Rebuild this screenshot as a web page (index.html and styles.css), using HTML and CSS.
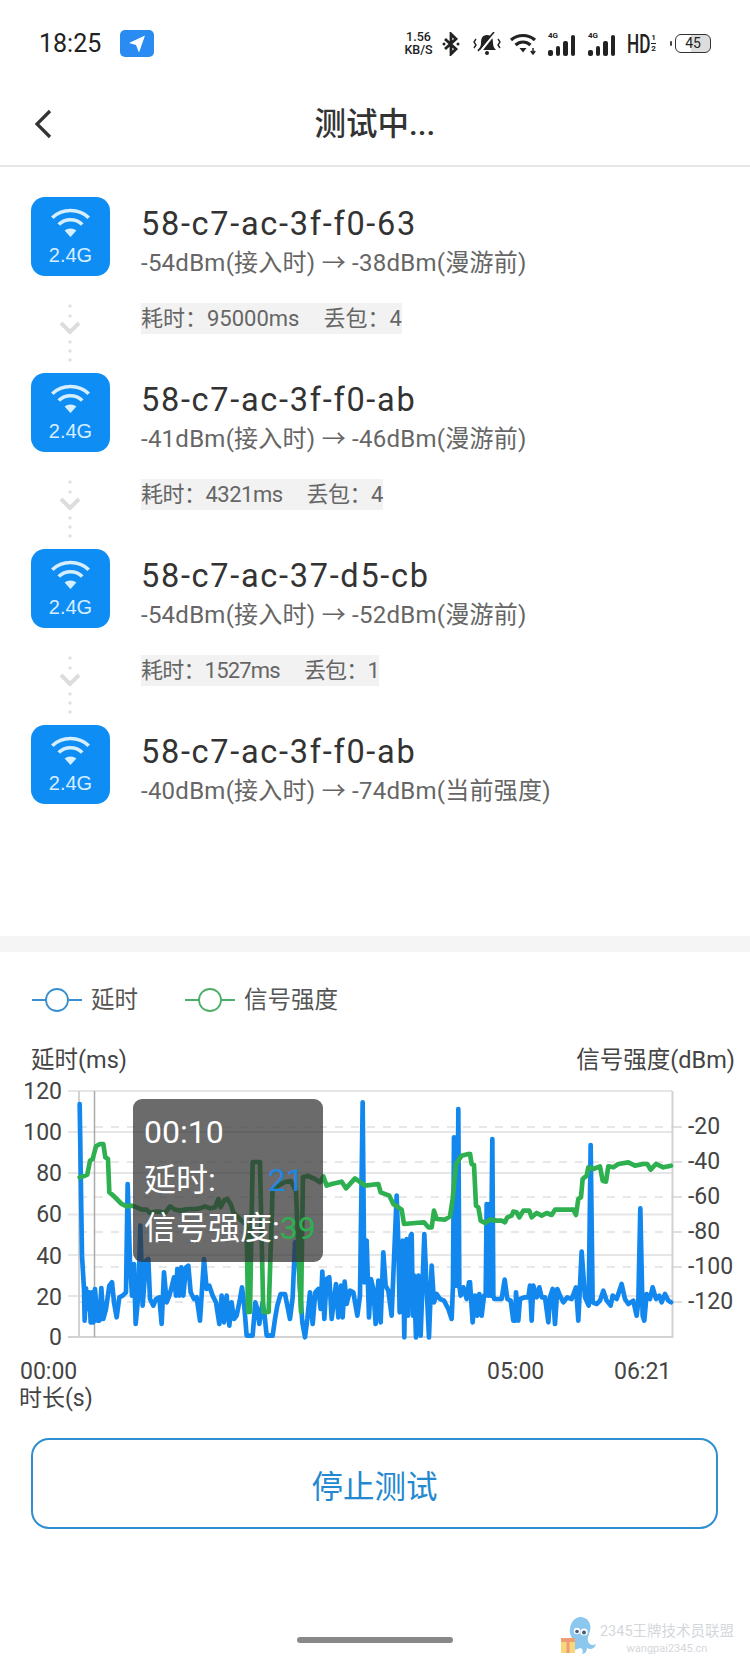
FILE: index.html
```html
<!DOCTYPE html>
<html lang="zh">
<head>
<meta charset="utf-8">
<title>测试中...</title>
<link rel="stylesheet" href="styles.css">
</head>
<body>
<div class="page">
  <header class="statusbar">
    <span class="time">18:25</span>
    <svg class="loc" viewBox="0 0 34 27"><rect width="34" height="27" rx="5" fill="#2a8cf2"/><path d="M25 5.500 L9 13 L16 15 L19 22.500 Z" fill="#fff"/></svg>
    <div class="status-right">
      <div class="speed"><span>1.56</span><span>KB/S</span></div>
      <svg class="bt" viewBox="0 0 18 24"><path d="M3 7 L14 17 L9 22 V2 L14 7 L3 17" fill="none" stroke="#222" stroke-width="2.800"/><circle cx="2" cy="12" r="1.500" fill="#222"/><circle cx="16" cy="12" r="1.500" fill="#222"/></svg>
      <svg class="bell" viewBox="0 0 28 24"><path d="M14 3 C9 3 8 7 8 11 C8 14 7 16 5 18 H23 C21 16 20 14 20 11 C20 7 19 3 14 3 Z" fill="#222"/><circle cx="14" cy="21" r="2" fill="#222"/><path d="M7 20 L22 1" stroke="#fff" stroke-width="2.200"/><path d="M5 19 L21 0" stroke="#222" stroke-width="1.600"/><path d="M3 7 L1 10 L3 13 L1 16 M25 7 L27 10 L25 13 L27 16" fill="none" stroke="#222" stroke-width="1.400"/></svg>
      <svg class="wifi-s" viewBox="0 0 28 22"><path d="M2 7 C9 1 19 1 26 7 M6.500 12 C11 8 17 8 21.500 12" fill="none" stroke="#222" stroke-width="3.200"/><path d="M10.500 15 H17.500 L14 19.500 Z" fill="#222"/><path d="M24 15 V20 M21.800 18 L24 21 L26.200 18" fill="none" stroke="#222" stroke-width="1.500"/></svg>
      <div class="sig"><span class="g4">4G</span><i class="b1"></i><i class="b2"></i><i class="b3"></i><i class="b4"></i></div>
      <div class="sig"><span class="g4">4G</span><i class="b1"></i><i class="b2"></i><i class="b3"></i><i class="b4"></i></div>
      <div class="hd"><span class="hd-t">HD</span><div class="hd-frac"><span>1</span><span>2</span></div></div>
      <div class="batt-wrap"><i class="batt-dot"></i><div class="batt"><span>45</span></div></div>
    </div>
  </header>

  <nav class="navbar">
    <svg class="back" viewBox="0 0 20 30"><path d="M17 2 L4 15 L17 28" fill="none" stroke="#333" stroke-width="3.200"/></svg>
    <h1 class="nav-title">测试中...</h1>
  </nav>

  <section class="list">
    <div class="node">
      <div class="tile"><svg class="tile-wifi" viewBox="0 0 38 28"><path d="M2 9 C11 0 27 0 36 9 M8 15.500 C14 9.500 24 9.500 30 15.500" fill="none" stroke="#d6eeff" stroke-width="3.300"/><path d="M13.500 21 C16.500 18.500 21.500 18.500 24.500 21 L19 27 Z" fill="#d6eeff"/></svg><span class="tile-band">2.4G</span></div>
      <div class="node-text"><div class="mac">58-c7-ac-3f-f0-63</div><div class="rssi">-54dBm(接入时) → -38dBm(漫游前)</div></div>
    </div>
    <div class="link">
      <svg class="arrow" viewBox="0 0 24 60"><circle cx="12" cy="3" r="1.800"/><circle cx="12" cy="13" r="1.800"/><path d="M3 20 L12 29 L21 20" fill="none" stroke="#ddd" stroke-width="4"/><circle cx="12" cy="39" r="1.800"/><circle cx="12" cy="48" r="1.800"/><circle cx="12" cy="57" r="1.800"/></svg>
      <div class="stat"><span>耗时：95000ms</span><span>丢包：4</span></div>
    </div>
    <div class="node">
      <div class="tile"><svg class="tile-wifi" viewBox="0 0 38 28"><path d="M2 9 C11 0 27 0 36 9 M8 15.500 C14 9.500 24 9.500 30 15.500" fill="none" stroke="#d6eeff" stroke-width="3.300"/><path d="M13.500 21 C16.500 18.500 21.500 18.500 24.500 21 L19 27 Z" fill="#d6eeff"/></svg><span class="tile-band">2.4G</span></div>
      <div class="node-text"><div class="mac">58-c7-ac-3f-f0-ab</div><div class="rssi">-41dBm(接入时) → -46dBm(漫游前)</div></div>
    </div>
    <div class="link">
      <svg class="arrow" viewBox="0 0 24 60"><circle cx="12" cy="3" r="1.800"/><circle cx="12" cy="13" r="1.800"/><path d="M3 20 L12 29 L21 20" fill="none" stroke="#ddd" stroke-width="4"/><circle cx="12" cy="39" r="1.800"/><circle cx="12" cy="48" r="1.800"/><circle cx="12" cy="57" r="1.800"/></svg>
      <div class="stat tight"><span>耗时：4321ms</span><span>丢包：4</span></div>
    </div>
    <div class="node">
      <div class="tile"><svg class="tile-wifi" viewBox="0 0 38 28"><path d="M2 9 C11 0 27 0 36 9 M8 15.500 C14 9.500 24 9.500 30 15.500" fill="none" stroke="#d6eeff" stroke-width="3.300"/><path d="M13.500 21 C16.500 18.500 21.500 18.500 24.500 21 L19 27 Z" fill="#d6eeff"/></svg><span class="tile-band">2.4G</span></div>
      <div class="node-text"><div class="mac">58-c7-ac-37-d5-cb</div><div class="rssi">-54dBm(接入时) → -52dBm(漫游前)</div></div>
    </div>
    <div class="link">
      <svg class="arrow" viewBox="0 0 24 60"><circle cx="12" cy="3" r="1.800"/><circle cx="12" cy="13" r="1.800"/><path d="M3 20 L12 29 L21 20" fill="none" stroke="#ddd" stroke-width="4"/><circle cx="12" cy="39" r="1.800"/><circle cx="12" cy="48" r="1.800"/><circle cx="12" cy="57" r="1.800"/></svg>
      <div class="stat tighter"><span>耗时：1527ms</span><span>丢包：1</span></div>
    </div>
    <div class="node">
      <div class="tile"><svg class="tile-wifi" viewBox="0 0 38 28"><path d="M2 9 C11 0 27 0 36 9 M8 15.500 C14 9.500 24 9.500 30 15.500" fill="none" stroke="#d6eeff" stroke-width="3.300"/><path d="M13.500 21 C16.500 18.500 21.500 18.500 24.500 21 L19 27 Z" fill="#d6eeff"/></svg><span class="tile-band">2.4G</span></div>
      <div class="node-text"><div class="mac">58-c7-ac-3f-f0-ab</div><div class="rssi">-40dBm(接入时) → -74dBm(当前强度)</div></div>
    </div>
  </section>

  <div class="band"></div>

  <section class="panel">
    <div class="legend">
      <div class="legend-item"><svg class="legend-mark blue" viewBox="0 0 50 26"><path d="M0 13 H14 M36 13 H50"/><circle cx="25" cy="13" r="11"/></svg><span>延时</span></div>
      <div class="legend-item"><svg class="legend-mark green" viewBox="0 0 50 26"><path d="M0 13 H14 M36 13 H50"/><circle cx="25" cy="13" r="11"/></svg><span>信号强度</span></div>
    </div>

    <div class="chart">
      <svg class="plot" viewBox="0 1040 750 375" width="750" height="375">
        <text class="axis title" x="31" y="1069">延时(ms)</text>
        <text class="axis title" x="735" y="1068.500" text-anchor="end">信号强度(dBm)</text>

        <g class="grid">
          <path d="M68 1092 H672 M68 1133 H672 M68 1174 H672 M68 1215.500 H672 M68 1256 H672 M68 1297 H672"/>
        </g>
        <g class="grid-dash">
          <path d="M79 1128 H672 M79 1163 H672 M79 1198 H672 M79 1233 H672 M79 1268 H672 M79 1303 H672"/>
        </g>
        <path class="tick" d="M672 1128 H682 M672 1163 H682 M672 1198 H682 M672 1233 H682 M672 1268 H682 M672 1303 H682"/>
        <path class="frame" d="M68 1338 H672.500 V1092 M79 1092 V1338"/>
        <path class="cursor" d="M94.500 1092 V1338"/>

        <g transform="translate(70 1090) scale(.3333)">
          <polyline class="lat" points="29,45 36,500 42,600 44,695 48,598 53,660 58,610 62,700 66,610 70,700 75,600 82,695 88,695 94,597 100,690 108,660 118,590 126,580 132,640 140,685 148,625 158,620 168,610 173,285 180,520 186,620 192,525 197,705 205,620 211,410 218,650 228,515 235,510 240,630 250,650 258,630 268,625 275,705 282,550 290,640 298,620 306,590 312,565 318,620 322,540 328,620 334,535 340,620 348,535 355,530 362,610 372,630 380,625 390,695 402,510 410,600 418,590 428,620 438,640 448,705 455,620 462,700 470,620 478,710 485,640 492,690 500,680 510,630 516,595 522,640 530,740 548,740 556,640 562,660 568,705 578,640 584,680 590,740 600,740"/>
        </g>
        <g transform="translate(270 1090) scale(.3333)">
          <polyline class="lat" points="0,740 8,740 15,690 22,650 32,615 45,615 52,650 60,690 68,625 75,460 82,460 90,600 97,700 105,745 112,690 120,610 128,705 136,610 145,600 152,660 157,548 163,690 170,570 178,565 185,690 198,585 205,685 213,590 218,685 224,578 230,645 240,605 250,610 262,680 270,620 278,40 283,580 290,455 297,685 303,570 310,600 317,705 325,575 332,700 340,490 347,590 355,605 365,680 380,320 385,460 389,670 393,470 398,455 403,745 407,500 410,450 414,680 418,500 422,440 425,435 429,680 432,560 438,745 445,560 452,740 463,435 470,600 477,745 485,530 492,640 500,615 510,630 522,635 535,660 545,690 549,590 552,145 556,590 559,145 562,590 565,60 568,590 572,620 580,595 590,630 597,580 600,580"/>
        </g>
        <g transform="translate(470 1090) scale(.3333)">
          <polyline class="lat" points="0,580 8,700 15,620 22,680 28,615 35,680 42,620 47,620 50,345 55,620 58,345 62,620 67,150 70,620 73,630 85,630 95,630 104,572 112,630 122,635 130,695 136,695 138,610 145,695 150,630 165,625 175,625 180,590 185,695 190,590 200,625 208,595 215,625 225,625 235,700 240,625 248,600 255,705 262,600 270,620 280,640 292,625 305,630 318,595 325,695 335,488 345,625 356,650 362,168 368,640 380,645 390,635 400,605 410,635 422,650 428,620 440,630 455,585 465,630 475,645 490,635 500,680 505,640 511,358 518,680 523,695 530,615 540,630 548,595 558,630 568,620 575,640 585,615 595,635 603,640"/>
        </g>

        <g transform="translate(70 1090) scale(.3333)">
          <polyline class="sig-line" points="29,265 40,262 52,257 60,215 68,210 78,172 90,165 100,165 106,205 114,210 118,310 130,320 140,330 155,345 170,352 185,350 200,355 215,362 230,362 240,372 255,368 270,368 285,372 300,352 315,362 330,365 345,362 360,360 375,360 390,358 405,352 420,358 435,355 445,330 452,355 462,335 472,330 482,345 490,370 505,385 520,400 530,410 534,669 540,669 548,219 570,219 580,669 596,669 608,300 645,279 663,276 678,306 693,669 699,264 714,261"/>
        </g>
        <g transform="translate(270 1090) scale(.3333)">
          <polyline class="sig-line" points="114,261 135,270 150,280 160,262 170,290 185,285 215,278 228,298 255,268 285,290 325,285 332,310 358,320 370,345 395,362 402,405 435,402 462,400 475,415 485,415 492,365 500,390 525,392 540,382 548,330 558,225 575,200 595,195 600,195"/>
        </g>
        <g transform="translate(470 1090) scale(.3333)">
          <polyline class="sig-line" points="0,195 5,225 12,228 18,350 25,355 32,395 45,402 60,392 80,395 95,395 105,400 112,385 125,380 130,368 140,370 148,385 160,365 178,365 185,385 200,372 215,380 230,372 245,378 255,362 310,362 318,378 325,330 333,325 338,270 350,260 355,235 370,240 390,232 398,275 408,278 415,232 430,235 445,225 475,220 495,230 520,225 532,225 542,242 558,225 580,235 603,230"/>
        </g>

        <text class="axis" x="62" y="1100" text-anchor="end">120</text>
        <text class="axis" x="62" y="1141" text-anchor="end">100</text>
        <text class="axis" x="62" y="1182" text-anchor="end">80</text>
        <text class="axis" x="62" y="1223" text-anchor="end">60</text>
        <text class="axis" x="62" y="1265" text-anchor="end">40</text>
        <text class="axis" x="62" y="1306" text-anchor="end">20</text>
        <text class="axis" x="62" y="1346" text-anchor="end">0</text>

        <text class="axis" x="688" y="1135">-20</text>
        <text class="axis" x="688" y="1170">-40</text>
        <text class="axis" x="688" y="1205">-60</text>
        <text class="axis" x="688" y="1240">-80</text>
        <text class="axis" x="688" y="1275">-100</text>
        <text class="axis" x="688" y="1310">-120</text>

        <text class="axis" x="20" y="1380">00:00</text>
        <text class="axis" x="487" y="1380">05:00</text>
        <text class="axis" x="614" y="1380">06:21</text>
        <text class="axis" x="19" y="1407">时长(s)</text>
      </svg>
      <div class="tooltip">
        <div class="tip-row">00:10</div>
        <div class="tip-row">延时:<span class="tip-lat">21</span></div>
        <div class="tip-row">信号强度:<span class="tip-sig">39</span></div>
      </div>
    </div>

    <button class="stop">停止测试</button>
  </section>

  <div class="home"></div>

  <div class="watermark">
    <svg class="octo" viewBox="0 0 40 40"><path d="M20 1 C28 1 32 8 30 15 C29 19 27 22 28 25 C29 29 33 30 36 28 C35 33 30 34 27 32 C27 35 25 38 22 38 C24 35 22 32 20 32 C17 33 14 35 11 34 C15 32 14 28 13 25 C12 21 9 18 10 12 C11 6 15 1 20 1 Z" fill="#8cc8ee"/><circle cx="17" cy="15" r="3.200" fill="#fff"/><circle cx="24" cy="16" r="3.600" fill="#fff"/><circle cx="17" cy="15.500" r="1.800" fill="#4a5a70"/><circle cx="24" cy="16.500" r="2" fill="#4a5a70"/><rect x="1" y="22" width="14" height="15" rx="1" fill="#f6d77a"/><rect x="1" y="22" width="14" height="4" fill="#f0a070"/><rect x="6.500" y="22" width="3" height="15" fill="#ef9a7a"/></svg>
    <div class="wm-text"><span class="wm-main">2345王牌技术员联盟</span><span class="wm-sub">wangpai2345.cn</span></div>
  </div>
</div>
</body>
</html>
```
FILE: styles.css
```css
* { box-sizing: border-box; margin: 0; padding: 0; }
html, body { background: #fff; }
body {
  width: 750px;
  height: 1665px;
  overflow: hidden;
  font-family: Roboto, "Noto Sans CJK SC", sans-serif;
  color: #333;
}
.page { position: relative; width: 750px; height: 1665px; }

/* status bar */
.statusbar { display: flex; align-items: center; height: 85px; padding: 2px 39px 0 39px; }
.time { font-size: 25px; color: #222; width: 81px; }
.loc { width: 34px; height: 27px; }
.status-right { margin-left: auto; display: flex; align-items: center; }
.speed { display: flex; flex-direction: column; align-items: center; font-size: 12.500px; line-height: 12.500px; color: #222; width: 31px; font-weight: 500; }
.bt { width: 18px; height: 24px; margin-left: 8px; }
.bell { width: 28px; height: 24px; margin-left: 13px; }
.wifi-s { width: 28px; height: 22px; margin-left: 8px; }
.sig { position: relative; display: flex; align-items: flex-end; gap: 3px; width: 29px; height: 24px; margin-left: 11px; }
.sig i { display: block; width: 4.500px; background: #222; border-radius: 2px; }
.sig .b1 { height: 6px; }
.sig .b2 { height: 10px; }
.sig .b3 { height: 15px; }
.sig .b4 { height: 21px; }
.g4 { position: absolute; left: 0; top: -1px; font-size: 8px; line-height: 10px; font-weight: 700; color: #222; }
.hd { display: flex; align-items: center; width: 31px; margin-left: 10px; color: #222; }
.hd-t { display: inline-block; width: 23px; font-size: 26px; line-height: 26px; font-weight: 500; transform: scaleX(.66); transform-origin: left center; }
.hd-frac { display: flex; flex-direction: column; width: 7px; align-items: center; font-size: 8px; line-height: 10px; font-weight: 700; }
.hd-frac span + span { border-top: 1px solid #222; }
.batt-wrap { display: flex; align-items: center; margin-left: 12px; }
.batt-dot { width: 2px; height: 5px; background: #444; margin-right: 3px; border-radius: 1px; }
.batt { width: 36px; height: 19px; border: 1.600px solid #333; border-radius: 6px; font-size: 14px; line-height: 16px; text-align: center; color: #222; background: linear-gradient(90deg, #fff 0, #fff 45%, #ddd 45%, #ddd 100%); }

/* nav */
.navbar { position: relative; display: flex; align-items: center; justify-content: center; height: 82px; border-bottom: 2px solid #e6e6e6; }
.back { position: absolute; left: 33px; top: 24px; width: 20px; height: 30px; }
.nav-title { font-size: 31.500px; font-weight: 500; color: #333; line-height: 78px; }

/* list */
.list { height: 769px; padding: 30px 0 0 31px; }
.node { display: flex; height: 79px; }
.tile { width: 79px; height: 79px; border-radius: 14px; background: #0e8df5; display: flex; flex-direction: column; align-items: center; padding-top: 11px; }
.tile-wifi { width: 41px; height: 30px; }
.tile-band { font-family: "Liberation Sans", sans-serif; font-size: 20px; line-height: 24px; margin-top: 5px; color: #d6eeff; }
.node-text { margin-left: 31px; }
.mac { font-size: 32.500px; line-height: 36px; margin-top: 9px; color: #333; letter-spacing: 1.700px; white-space: nowrap; }
.rssi { font-size: 24px; line-height: 30px; margin-top: 6px; color: #666; white-space: nowrap; letter-spacing: .25px; }
.link { display: flex; height: 97px; align-items: flex-start; padding-top: 27px; }
.arrow { width: 24px; height: 60px; margin-left: 27px; fill: #e2e2e2; }
.stat { display: flex; gap: 24px; margin-left: 59px; height: 31px; line-height: 31px; background: #f2f2f2; font-size: 22px; color: #666; }
.stat.tight { letter-spacing: -.5px; }
.stat.tighter { letter-spacing: -.8px; }

.band { height: 16px; background: #f5f5f5; }

/* chart */
.panel { padding-top: 30px; }
.legend { display: flex; align-items: center; height: 36px; padding-left: 32px; gap: 47px; margin-bottom: 21px; }
.legend-item { display: flex; align-items: center; gap: 9px; font-size: 23.500px; color: #555; }
.legend-item span { padding-bottom: 4px; }
.legend-mark { width: 50px; height: 26px; fill: none; stroke-width: 1.800; }
.legend-mark.blue { stroke: #3a8fd0; }
.legend-mark.green { stroke: #4caf68; }
.chart { position: relative; width: 750px; height: 375px; }
.plot { display: block; }
.axis { font-family: Roboto, "Noto Sans CJK SC", sans-serif; font-size: 23px; fill: #444; }
.axis.title { font-size: 23.500px; }
.grid path { stroke: #e6e6e6; stroke-width: 2; fill: none; }
.grid-dash path { stroke: #e8e8e8; stroke-width: 2; stroke-dasharray: 8 8; fill: none; }
.tick { stroke: #e0e0e0; stroke-width: 2; fill: none; }
.frame { stroke: #d2d2d2; stroke-width: 2; fill: none; }
.cursor { stroke: #aaa; stroke-width: 1.500; fill: none; }
.lat, .sig-line { fill: none; stroke-linejoin: round; stroke-linecap: round; stroke-width: 14; }
.lat { stroke: #1287ee; }
.sig-line { stroke: #2fb050; }
.tooltip { position: absolute; left: 133px; top: 60px; width: 190px; height: 163px; padding: 9px 11px; border-radius: 9px; background: rgba(50, 50, 50, .72); color: #fff; font-size: 32px; line-height: 48px; white-space: nowrap; }
.tip-lat { margin-left: 52px; color: #1f87e0; }
.tip-sig { color: #2fb050; }

.stop { display: block; width: 687px; height: 91px; margin: 24px 0 0 31px; background: #fff; border: 2px solid #2f8fd0; border-radius: 18px; font-family: Roboto, "Noto Sans CJK SC", sans-serif; font-size: 31.500px; color: #2488d0; }

.home { width: 156px; height: 6px; margin: 108px auto 0; background: #888; border-radius: 3px; }

.watermark { position: absolute; left: 560px; top: 1616px; display: flex; }
.octo { width: 40px; height: 40px; }
.wm-text { display: flex; flex-direction: column; align-items: center; width: 134px; padding-top: 7px; }
.wm-main { font-size: 14.500px; line-height: 17px; color: #d4d8dc; white-space: nowrap; }
.wm-sub { font-size: 11px; line-height: 13px; margin-top: 2px; color: #d4d8dc; }
```
